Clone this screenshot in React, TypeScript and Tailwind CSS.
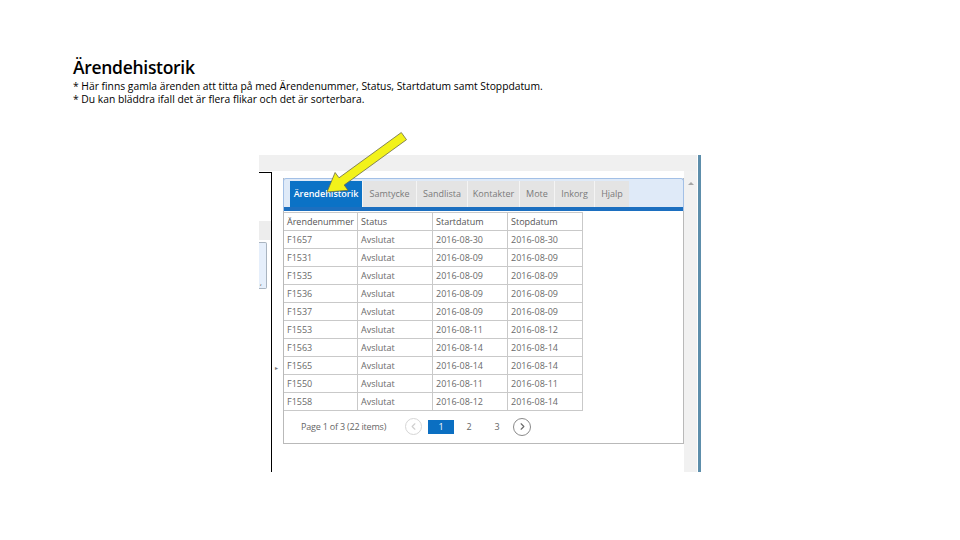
import { ChevronLeft, ChevronRight } from 'lucide-react';

const rows = [
  ['F1657', 'Avslutat', '2016-08-30', '2016-08-30'],
  ['F1531', 'Avslutat', '2016-08-09', '2016-08-09'],
  ['F1535', 'Avslutat', '2016-08-09', '2016-08-09'],
  ['F1536', 'Avslutat', '2016-08-09', '2016-08-09'],
  ['F1537', 'Avslutat', '2016-08-09', '2016-08-09'],
  ['F1553', 'Avslutat', '2016-08-11', '2016-08-12'],
  ['F1563', 'Avslutat', '2016-08-14', '2016-08-14'],
  ['F1565', 'Avslutat', '2016-08-14', '2016-08-14'],
  ['F1550', 'Avslutat', '2016-08-11', '2016-08-11'],
  ['F1558', 'Avslutat', '2016-08-12', '2016-08-14'],
];

const tabs = [
  { label: 'Samtycke', w: 'w-[54px]' },
  { label: 'Sandlista', w: 'w-[51px]' },
  { label: 'Kontakter', w: 'w-[52px]' },
  { label: 'Mote', w: 'w-[35px]' },
  { label: 'Inkorg', w: 'w-[40px]' },
  { label: 'Hjalp', w: 'w-[35px]' },
];

export default function App() {
  return (
    <div className="relative w-[960px] h-[540px] bg-white overflow-hidden font-['Open_Sans',sans-serif]">
      {/* Slide text */}
      <div className="pl-[73px] pt-[54px]">
        <h1 className="h-[26px] text-[17.5px] leading-[26px] font-semibold text-black tracking-[-0.3px]">Ärendehistorik</h1>
        <p className="text-[10.3px] leading-[13px] text-black">* Här finns gamla ärenden att titta på med Ärendenummer, Status, Startdatum samt Stoppdatum.</p>
        <p className="text-[10.3px] leading-[13px] text-black">* Du kan bläddra ifall det är flera flikar och det är sorterbara.</p>
      </div>

      {/* Screenshot */}
      <div className="ml-[259px] mt-[49px] w-[443px] h-[317px] flex">
        <div className="w-[438px] flex flex-col">
          <div className="h-[16px] bg-[#f0f0f0]" />
          <div className="flex flex-1">
            {/* left strip */}
            <div className="w-[13px] mt-[1px] border-t border-r border-black flex flex-col">
              <div className="mt-[48px] h-[19px] bg-[#ededed]" />
              <div className="mt-[2px] h-[47px] w-[8px] bg-[#e6effb] border border-l-0 border-[#a9b4c0] rounded-r-[2px] flex items-end">
                <span className="text-[7px] leading-[10px] text-[#444] pl-[1px]">,</span>
              </div>
              <div className="flex-1" />
            </div>

            {/* main */}
            <div className="relative flex-1 pl-[11px] pt-[7px]">
              <span className="absolute left-[3px] top-[194px] text-[6px] leading-none text-[#777]">▸</span>
              <div className="w-[401px] h-[266px] border-x border-b border-[#b9b9b9] flex flex-col">
                {/* tab header */}
                <div className="bg-[#dfeaf8] border-t border-x border-[#a3c0e6] rounded-t-[3px] -mx-px">
                  <div className="pl-[6px] pt-[2px] flex h-[28px]">
                    <div className="w-[72px] h-[26px] bg-[#0b72c6] text-white text-[9px] font-semibold flex items-center justify-center">
                      Ärendehistorik
                    </div>
                    {tabs.map((t) => (
                      <div
                        key={t.label}
                        className={`${t.w} h-[26px] bg-[#e4e4e4] border-l border-[#f4f4f4] text-[#7a7a7a] text-[9px] flex items-center justify-center`}
                      >
                        {t.label}
                      </div>
                    ))}
                  </div>
                  <div className="h-[4px] bg-[#1c6fc0]" />
                </div>

                {/* table */}
                <div className="mt-[1px] w-[299px] border-t border-r border-[#c9c9c9] text-[9px] text-[#6a6a6a]">
                  <div className="grid grid-cols-[74px_75px_75px_75px] h-[18px] border-b border-[#c9c9c9] text-[#555]">
                    {['Ärendenummer', 'Status', 'Startdatum', 'Stopdatum'].map((h, i) => (
                      <div key={h} className={`pl-[3px] flex items-center ${i < 3 ? 'border-r border-[#c9c9c9]' : ''}`}>{h}</div>
                    ))}
                  </div>
                  {rows.map((r) => (
                    <div key={r[0]} className="grid grid-cols-[74px_75px_75px_75px] h-[18px] border-b border-[#c9c9c9]">
                      {r.map((c, i) => (
                        <div key={i} className={`pl-[3px] flex items-center ${i < 3 ? 'border-r border-[#c9c9c9]' : ''}`}>{c}</div>
                      ))}
                    </div>
                  ))}
                </div>

                {/* pager */}
                <div className="flex items-center h-[31px] pl-[17px] text-[9px] text-[#666]">
                  <span className="w-[104px] tracking-[-0.2px]">Page 1 of 3 (22 items)</span>
                  <span className="w-[17px] h-[17px] rounded-full border border-[#d6d6d6] flex items-center justify-center text-[#cfcfcf]">
                    <ChevronLeft size={11} strokeWidth={2.5} />
                  </span>
                  <span className="ml-[6px] w-[26px] h-[14px] bg-[#0b6fc2] text-white flex items-center justify-center">1</span>
                  <span className="w-[30px] text-center">2</span>
                  <span className="w-[26px] text-center">3</span>
                  <span className="ml-[3px] w-[18px] h-[18px] rounded-full border border-[#8a8a8a] flex items-center justify-center text-[#6a6a6a]">
                    <ChevronRight size={11} strokeWidth={2.5} />
                  </span>
                </div>
              </div>
            </div>

            {/* scrollbar */}
            <div className="w-[13px] bg-[#f1f1f1] flex justify-center pt-[11px]">
              <div className="w-0 h-0 border-x-[3px] border-x-transparent border-b-[3px] border-b-[#a5a5a5]" />
            </div>
          </div>
        </div>
        <div className="ml-[1px] w-[3px] bg-[#5d8eab]" />
      </div>

      {/* yellow arrow callout */}
      <svg className="absolute left-0 top-0 pointer-events-none" width="960" height="540">
        <polygon
          points="327,192 348,190.3 344.2,185 406.5,139.7 401.3,132.5 339,177.8 335.1,172.5"
          fill="#f2f21a"
          stroke="#6b6b4a"
          strokeWidth="0.8"
          strokeLinejoin="round"
        />
      </svg>
    </div>
  );
}
